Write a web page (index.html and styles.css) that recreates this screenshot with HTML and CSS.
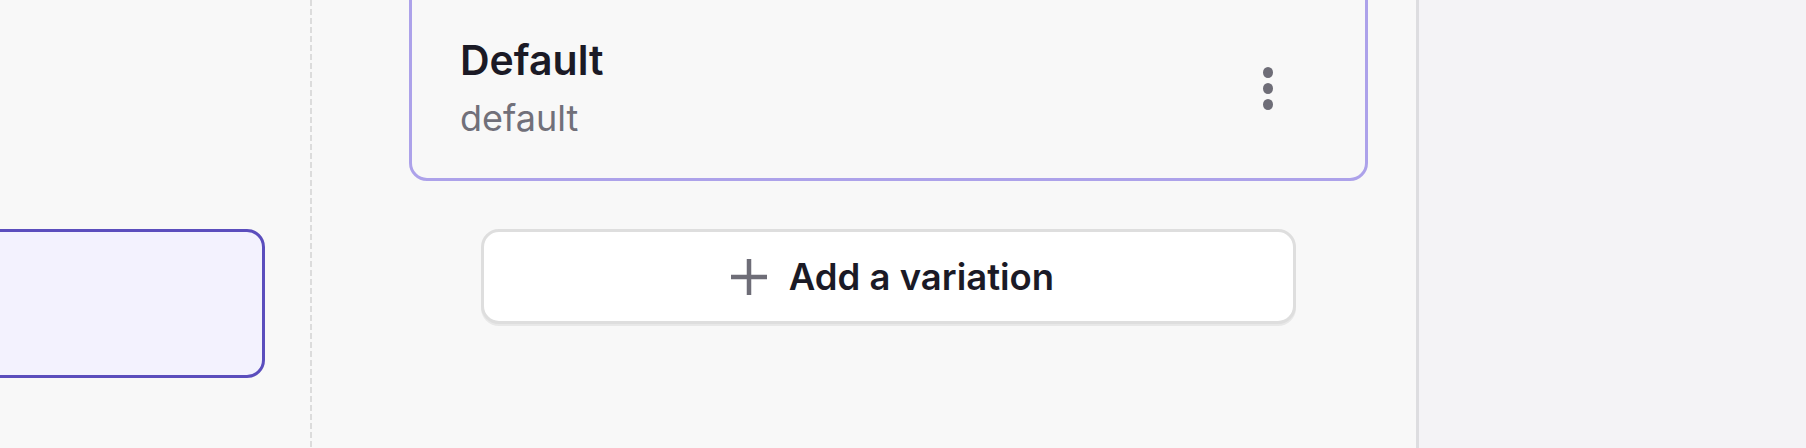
FILE: index.html
```html
<!DOCTYPE html>
<html>
<head>
<meta charset="utf-8">
<link rel="stylesheet" href="styles.css">
</head>
<body>
<div class="app">
  <aside class="rail">
    <div class="rail-card"></div>
  </aside>
  <div class="rail-divider"></div>
  <main class="main">
    <div class="variant-card">
      <div class="variant-text">
        <div class="variant-title">Default</div>
        <div class="variant-key">default</div>
      </div>
      <button class="kebab" aria-label="More">
        <span class="dot"></span><span class="dot"></span><span class="dot"></span>
      </button>
    </div>
    <button class="add-btn">
      <svg class="plus" viewBox="0 0 36 36" width="36" height="36"><path d="M18 0v36M0 18h36" stroke="#6e6d77" stroke-width="4.5" fill="none"/></svg>
      <span>Add a variation</span>
    </button>
  </main>
  <div class="panel-divider"></div>
  <section class="side"></section>
</div>
</body>
</html>
```
FILE: styles.css
```css
* { box-sizing: border-box; }
html, body { margin: 0; padding: 0; }
body {
  width: 1806px;
  height: 448px;
  overflow: hidden;
  background: #f8f8f8;
  font-family: Inter, "Noto Sans", sans-serif;
}
.app {
  display: flex;
  height: 448px;
}
.rail {
  width: 310px;
  flex: none;
  padding-top: 229px;
}
.rail-card {
  margin-left: -20px;
  width: 285px;
  height: 149px;
  background: #f3f2fe;
  border: 3px solid #5b4ebd;
  border-radius: 18px;
}
.rail-divider {
  width: 2px;
  flex: none;
  background: repeating-linear-gradient(to bottom, #dcdcdc 0 6px, transparent 6px 9px);
}
.main {
  width: 1104px;
  flex: none;
  padding: 0 48px 0 97px;
  display: flex;
  flex-direction: column;
}
.variant-card {
  margin-top: -30px;
  height: 211px;
  border: 3px solid #ada2ea;
  border-radius: 18px;
  display: flex;
  align-items: center;
  padding: 24px 92px 0 48px;
}
.variant-text { flex: 1; }
.variant-title {
  font-size: 41px;
  line-height: 48px;
  font-weight: 600;
  color: #1b1a26;
}
.variant-key {
  margin-top: 12px;
  font-size: 36px;
  line-height: 44px;
  color: #71707a;
}
.kebab {
  border: 0;
  background: none;
  padding: 0;
  display: flex;
  flex-direction: column;
  gap: 5px;
  margin-top: 2px;
}
.dot {
  width: 10px;
  height: 11px;
  border-radius: 50%;
  background: #6e6d77;
}
.add-btn {
  margin: 48px auto 0;
  width: 815px;
  height: 95px;
  background: #fff;
  border: 3px solid #dedede;
  border-radius: 18px;
  box-shadow: 0 2px 0 #e8e8e8;
  display: flex;
  align-items: center;
  justify-content: center;
  gap: 22px;
  font-family: Inter, "Noto Sans", sans-serif;
  font-size: 36.5px;
  font-weight: 600;
  color: #1b1a26;
  padding: 0 0 0 8px;
}
.plus { flex: none; }
.panel-divider {
  width: 3px;
  flex: none;
  background: #dddde0;
}
.side {
  flex: 1;
  background: #f4f3f6;
}
```
